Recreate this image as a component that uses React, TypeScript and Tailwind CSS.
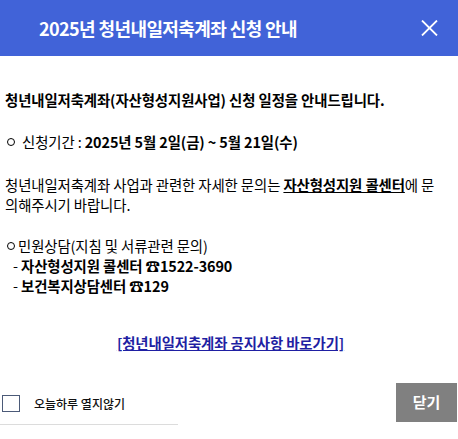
import React from "react";

export default function App() {
  return (
    <div className="w-[458px] h-[439px] bg-white text-black overflow-hidden font-['Noto_Sans_CJK_KR',sans-serif]">
      <div className="h-[56px] bg-[#4163d8] flex items-center justify-between">
        <h1 className="pl-[39px] text-white text-[18px] font-bold tracking-[-0.6px]">
          2025년 청년내일저축계좌 신청 안내
        </h1>
        <button className="mr-[20px] w-[18px] h-[18px] flex items-center justify-center" aria-label="close">
          <svg width="17" height="16" viewBox="0 0 17 16" fill="none">
            <path d="M1 0.5L16 15.5M16 0.5L1 15.5" stroke="white" strokeWidth="1.8" />
          </svg>
        </button>
      </div>

      <div className="pl-[5px] pr-[2px] pt-[34px] text-[14.4px] leading-[20px] tracking-[-0.1px]">
        <p className="font-bold">청년내일저축계좌(자산형성지원사업) 신청 일정을 안내드립니다.</p>
        <p className="mt-[22px] flex items-center whitespace-nowrap">
          <span className="inline-block ml-[2px] mr-[7px] w-[8px] h-[8px] rounded-full border-[1.3px] border-black" />
          <span>신청기간 :&nbsp;</span>
          <b>2025년 5월 2일(금) ~ 5월 21일(수)</b>
        </p>
        <p className="mt-[23px] whitespace-nowrap">
          청년내일저축계좌 사업과 관련한 자세한 문의는 <b className="underline">자산형성지원 콜센터</b>에 문
          <br />
          의해주시기 바랍니다.
        </p>
        <div className="mt-[21px]">
          <p className="flex items-center">
            <span className="inline-block ml-[2px] mr-[3px] w-[8px] h-[8px] rounded-full border-[1.3px] border-black" />
            <span>민원상담(지침 및 서류관련 문의)</span>
          </p>
          <p className="pl-[8px]">
            - <b>자산형성지원 콜센터 ☎1522-3690</b>
          </p>
          <p className="pl-[8px]">
            - <b>보건복지상담센터 ☎129</b>
          </p>
        </div>
        <p className="mt-[37px] text-center">
          <a href="#" className="font-bold text-[#1f1fa3] underline">
            [청년내일저축계좌 공지사항 바로가기]
          </a>
        </p>
      </div>

      <div className="mt-[30px] flex items-start justify-between">
        <label className="w-[178px] h-[42px] border-b border-[#dcdcdc] flex items-center pl-[2px] text-[12px] font-medium text-[#111]">
          <span className="w-[18px] h-[17px] border border-[#4b5a78] bg-white inline-block" />
          <span className="ml-[14px]">오늘하루 열지않기</span>
        </label>
        <button className="w-[61px] h-[39px] mr-[1px] bg-[#808080] text-white text-[15px] font-bold flex items-center justify-center">
          닫기
        </button>
      </div>
    </div>
  );
}
